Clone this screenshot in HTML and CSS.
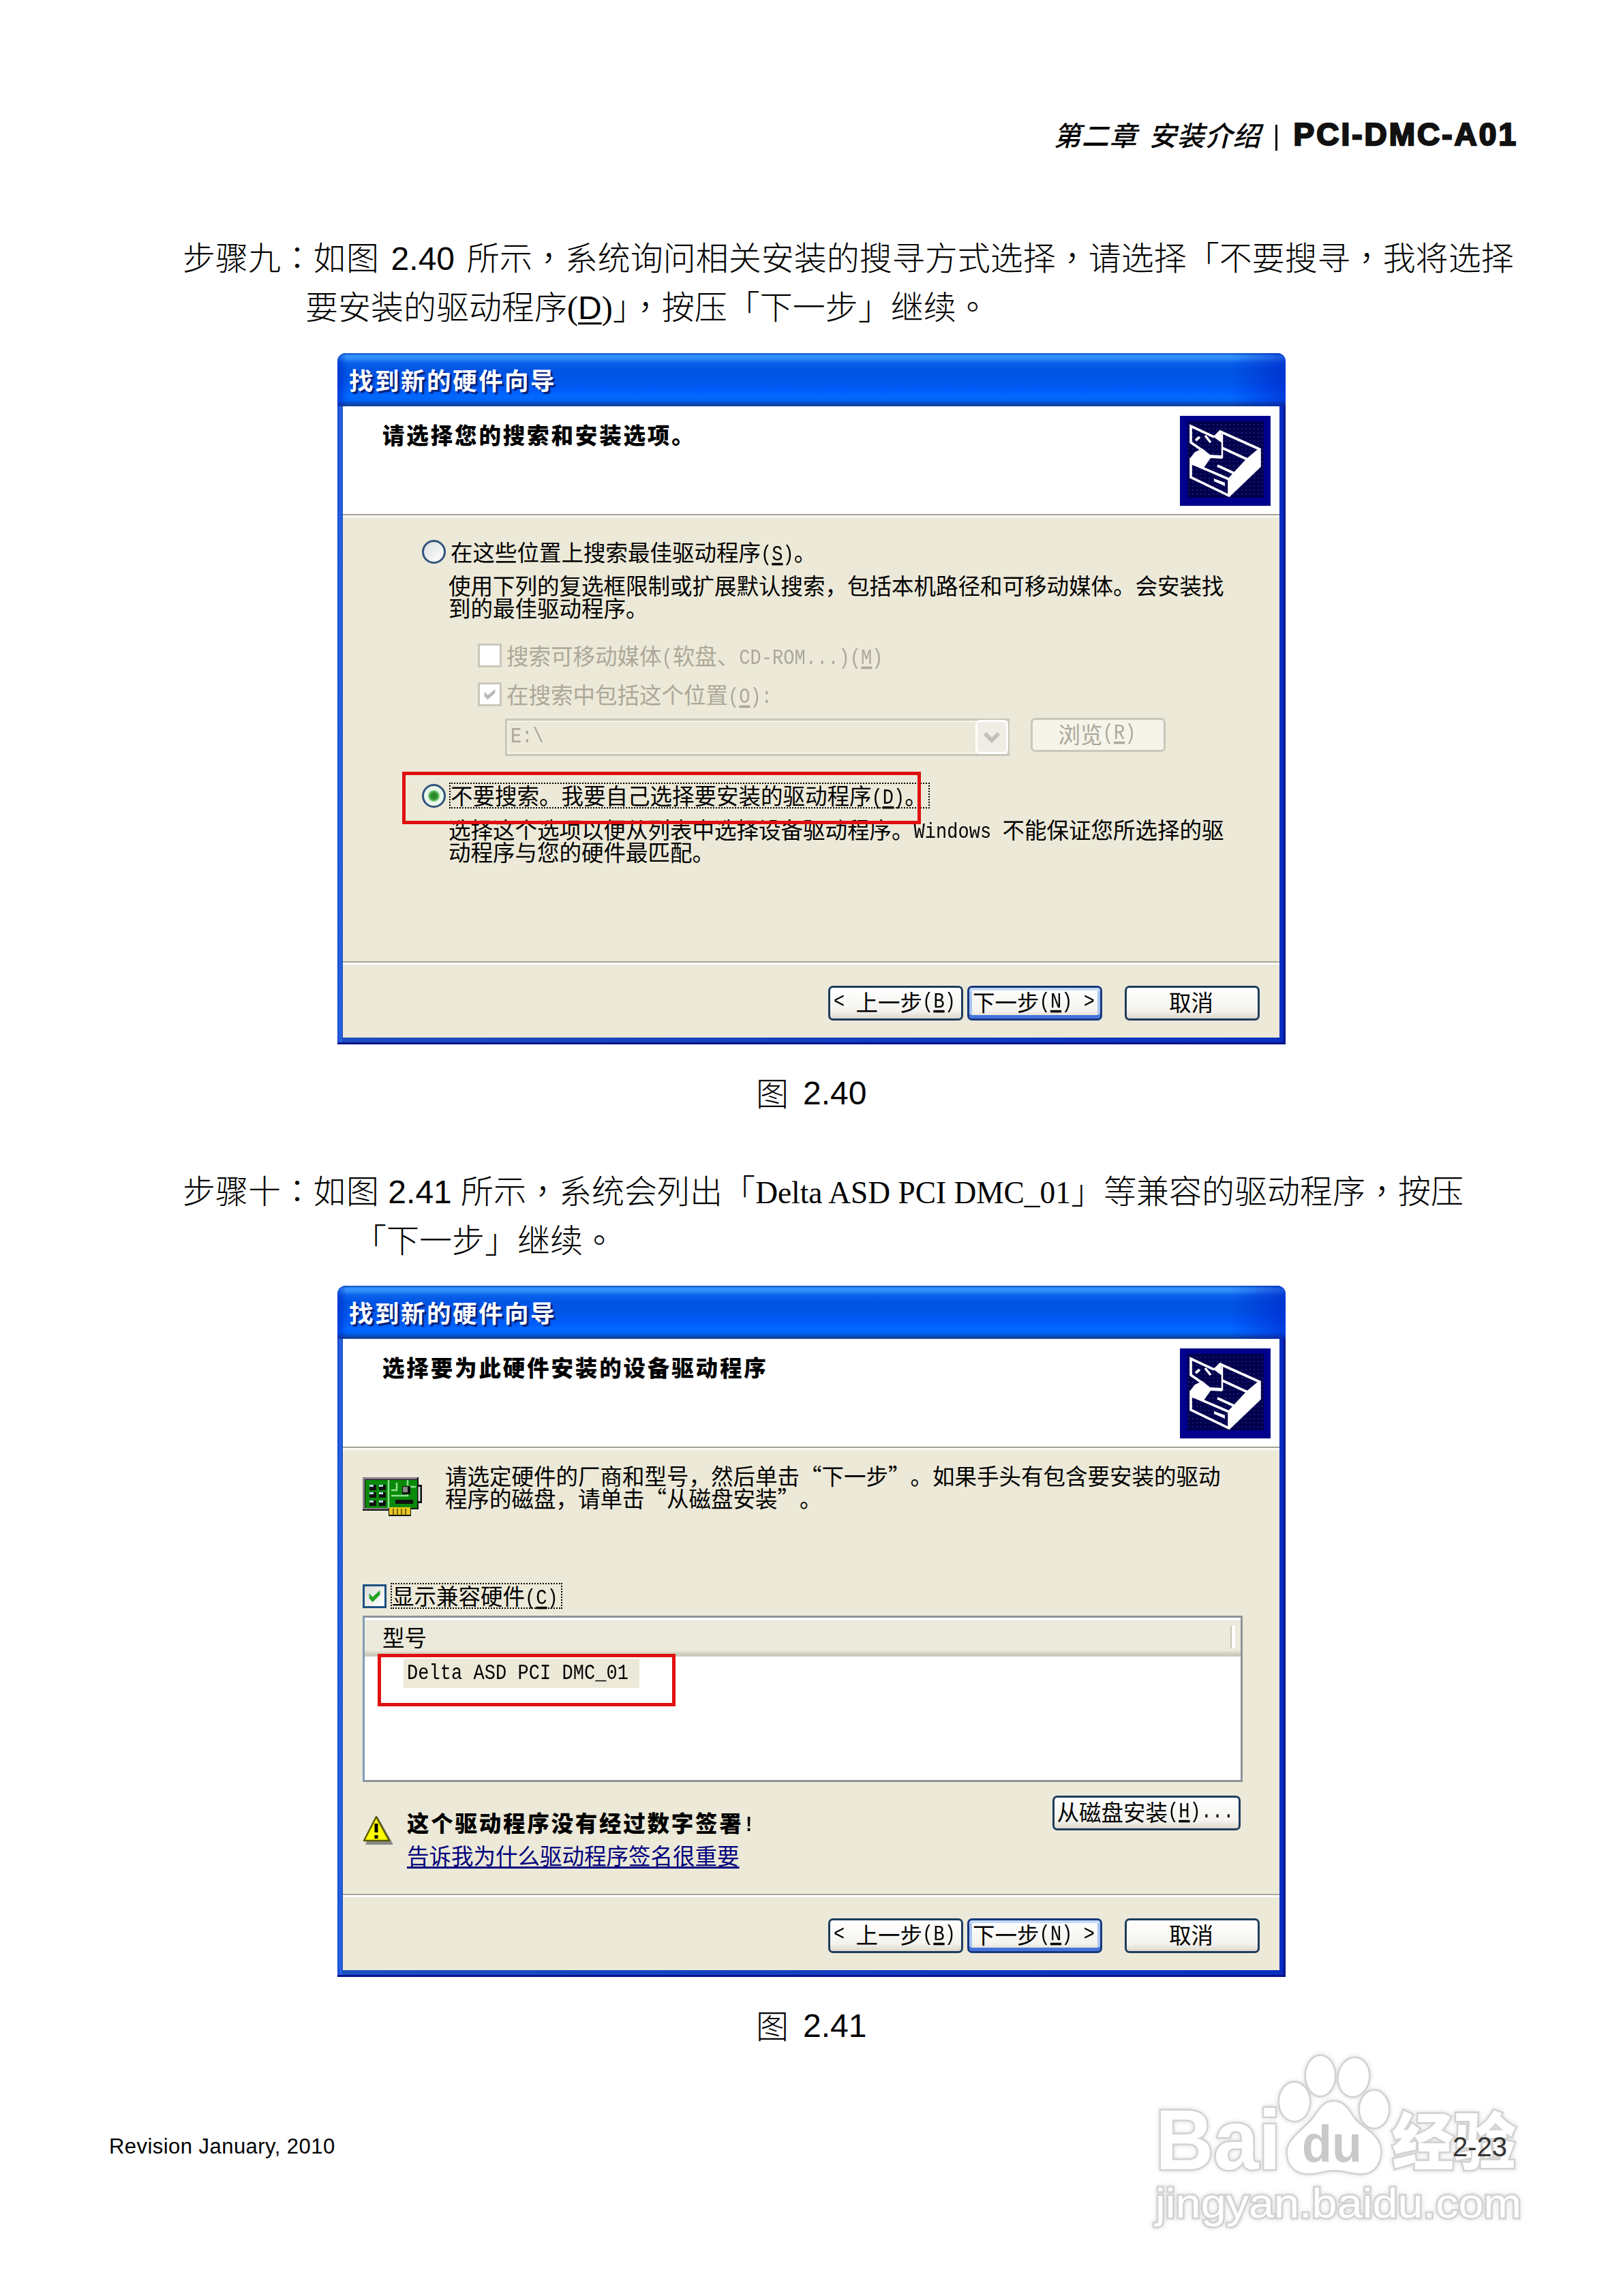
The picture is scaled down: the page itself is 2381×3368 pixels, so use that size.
FILE: index.html
```html
<!DOCTYPE html>
<html lang="zh-CN">
<head>
<meta charset="utf-8">
<title>PCI-DMC-A01 安装介绍</title>
<link rel="stylesheet" href="styles.css">
</head>
<body>
<svg width="0" height="0" class="defs" aria-hidden="true">
  <defs>
    <pattern id="dots" width="6" height="6" patternUnits="userSpaceOnUse"><rect width="6" height="6" fill="#00004c"/><rect width="2" height="2" fill="#1c1c78"/></pattern>
    <symbol id="wizard" viewBox="0 0 133 132">
      <rect width="133" height="132" fill="#00008c"/>
      <rect x="11" y="8" width="112" height="112" fill="url(#dots)"/>
      <g fill="none" stroke="#fff" stroke-width="3.6">
        <path d="M50 31 16 15V39L32 50"/>
        <path d="M52 30 59 23 117 49V74L72 117 16 90V62"/>
        <path d="M16 69 72 93V117M72 93 99 64 117 49M62 47 99 64M55 73 79 84M23 36l6-5M37 29l8 10"/>
        <path d="M62 26V62" stroke-width="2.5"/>
      </g>
      <g fill="#fff">
        <path d="M117 49V74L72 117V93L99 64Z"/>
        <path d="M48 30 60 23 62 40Z"/>
        <path d="M15 62 22 53 33 48 44 57 62 58V63L45 62 35 76 15 69Z"/>
        <path d="M50 92 66 98V103L50 96Z"/>
      </g>
    </symbol>
  </defs>
</svg>
<main class="page">
  <header class="head">
    <span class="chapter">第二章 安装介绍</span><span class="bar"></span><span class="model">PCI-DMC-A01</span>
  </header>

  <section class="step step-nine" lang="zh-TW">
    <div class="line wide-space">步骤九：如图 <span class="sans">2.40</span> 所示，系统询问相关安装的搜寻方式选择，请选择「不要搜寻，我将选择</div>
    <div class="line second">要安装的驱动程序<span class="serif">(</span><u class="sans">D</u><span class="serif">)</span>」，按压「下一步」继续。</div>
  </section>

  <section class="dialog">
    <div class="title">找到新的硬件向导</div>
    <div class="inner">
      <div class="banner"><b>请选择您的搜索和安装选项。</b><svg class="wiz"><use href="#wizard"/></svg></div>
      <div class="content">
        <div class="row radio-row first-row"><i class="radio"></i><span>在这些位置上搜索最佳驱动程序<s>(<u>S</u>)</s>。</span></div>
        <p class="desc">使用下列的复选框限制或扩展默认搜索，包括本机路径和可移动媒体。会安装找<br>到的最佳驱动程序。</p>
        <div class="row sub sub-a"><i class="check"></i><span>搜索可移动媒体<s>(</s>软盘、<s>CD-ROM...)(<u>M</u>)</s></span></div>
        <div class="row sub sub-b"><i class="check"><svg viewBox="0 0 35 35"><path d="M8 13 14 19 27 8V15L14 27 8 21Z" fill="#b9b7bd"/></svg></i><span>在搜索中包括这个位置<s>(<u>O</u>):</s></span></div>
        <div class="path-row">
          <div class="combo"><s>E:\</s><i class="drop"><svg viewBox="0 0 42 44"><path d="M11 17 21 27 31 17" fill="none" stroke="#c3c0b8" stroke-width="6"/></svg></i></div>
          <div class="btn off">浏览<s>(<u>R</u>)</s></div>
        </div>
        <div class="row radio-row second-row"><i class="radio on"></i><span class="focus">不要搜索。我要自己选择要安装的驱动程序<s>(<u>D</u>)</s>。</span></div>
        <p class="desc">选择这个选项以便从列表中选择设备驱动程序。<s>Windows </s>不能保证您所选择的驱<br>动程序与您的硬件最匹配。</p>
      </div>
      <div class="actions"><div class="btn"><s>&lt; </s>上一步<s>(<u>B</u>)</s></div><div class="btn default">下一步<s>(<u>N</u>) &gt;</s></div><div class="btn cancel">取消</div></div>
    </div>
    <div class="mark mark-radio"></div>
  </section>
  <div class="caption" lang="zh-TW"><span class="fig">图</span><span class="sans">2.40</span></div>

  <section class="step step-ten" lang="zh-TW">
    <div class="line">步骤十：如图<span class="sans"> 2.41 </span>所示，系统会列出「<span class="serif device">Delta ASD PCI DMC_01</span>」等兼容的驱动程序，按压</div>
    <div class="line second">「下一步」继续。</div>
  </section>

  <section class="dialog dialog-two">
    <div class="title">找到新的硬件向导</div>
    <div class="inner">
      <div class="banner"><b>选择要为此硬件安装的设备驱动程序</b><svg class="wiz"><use href="#wizard"/></svg></div>
      <div class="content list-content">
        <div class="intro">
          <svg class="board" viewBox="0 0 87 57">
            <path d="M0 0H82V11H87V38H82V47H71V57H38V49H0Z" fill="#111"/>
            <path d="M0 0H80V3H3V46H0Z" fill="#8d8090"/>
            <rect x="4" y="4" width="76" height="41" fill="#0a8a0a"/>
            <path d="M0 46H38" stroke="#8d8090" stroke-width="2"/>
            <path d="M38 4V45M42 27H66V14H78M50 8V19H42M66 4V12" stroke="#8fe08f" stroke-width="2.5" fill="none"/>
            <g fill="#111"><path d="M10 11H20V19H10ZM24 11H34V19H24ZM10 22H20V30H10ZM24 22H34V30H24ZM10 34H20V42H10ZM24 34H34V42H24ZM48 33H74V39H48ZM58 13H70V25H58Z"/></g>
            <g fill="#b9d8e8"><path d="M10 11H16V14H10ZM24 11H30V14H24ZM10 22H16V25H10ZM24 22H30V25H24ZM10 34H16V37H10ZM24 34H30V37H24Z"/></g>
            <rect x="59" y="14" width="7" height="8" fill="#888"/>
            <path d="M83 14V35" stroke="#ddd" stroke-width="3"/>
            <path d="M39 44H70V55H39Z" fill="#e8c820"/><path d="M45 46V55M51 46V55M57 46V55M63 46V55" stroke="#7a6400" stroke-width="2"/>
          </svg>
          <p>请选定硬件的厂商和型号，然后单击“下一步”。如果手头有包含要安装的驱动<br>程序的磁盘，请单击“从磁盘安装”。</p>
        </div>
        <div class="row compat"><i class="check live"><svg viewBox="0 0 35 35"><path d="M8 12 14 19 27 7V15L14 28 8 21Z" fill="#21a121"/></svg></i><span class="focus">显示兼容硬件<s>(<u>C</u>)</s></span></div>
        <div class="list">
          <div class="list-head">型号</div>
          <div class="item"><s>Delta ASD PCI DMC_01</s></div>
        </div>
        <div class="sign">
          <svg class="warn" viewBox="0 0 44 43"><path d="M22 5 43 42H6Z" fill="#888" stroke="#888" stroke-width="3"/><path d="M20 2 39 37H2Z" fill="#ffff00" stroke="#5a5a00" stroke-width="2.5" stroke-linejoin="round"/><path d="M20 12V25M20 29V34" stroke="#000" stroke-width="5"/></svg>
          <div class="sign-text"><b>这个驱动程序没有经过数字签署<s>!</s></b><a>告诉我为什么驱动程序签名很重要</a></div>
          <div class="btn disk">从磁盘安装<s>(<u>H</u>)...</s></div>
        </div>
      </div>
      <div class="actions"><div class="btn"><s>&lt; </s>上一步<s>(<u>B</u>)</s></div><div class="btn default">下一步<s>(<u>N</u>) &gt;</s></div><div class="btn cancel">取消</div></div>
    </div>
    <div class="mark mark-item"></div>
  </section>
  <div class="caption" lang="zh-TW"><span class="fig">图</span><span class="sans">2.41</span></div>

  <footer class="foot"><span class="rev">Revision January, 2010</span><span class="num">2-23</span></footer>

  <svg class="watermark" viewBox="0 0 640 330">
    <g class="wm">
      <text x="55" y="202" font-size="125" textLength="184" lengthAdjust="spacingAndGlyphs" class="latin">Bai</text>
      <ellipse cx="259" cy="103" rx="22" ry="28"/>
      <ellipse cx="297" cy="65" rx="21" ry="29"/>
      <ellipse cx="346" cy="67" rx="22" ry="28" transform="rotate(8 346 67)"/>
      <ellipse cx="376" cy="114" rx="21" ry="27"/>
      <path d="M316 103C330 103 337 113 345 126C355 141 384 150 385 174C386 192 376 208 358 208C342 208 332 203 317 203C302 203 296 208 279 208C259 208 248 194 249 175C250 157 276 142 288 126C297 114 302 103 316 103Z"/>
      <text x="402" y="195" font-size="91" textLength="182" class="cjk">经验</text>
      <text x="55" y="273" font-size="62" textLength="537" lengthAdjust="spacingAndGlyphs" class="url">jingyan.baidu.com</text>
    </g>
    <text x="270" y="191" font-size="76" textLength="88" lengthAdjust="spacingAndGlyphs" class="du">du</text>
  </svg>
</main>
</body>
</html>
```
FILE: styles.css
```css
* { box-sizing: border-box; }
body { margin: 0; background: #fff; }
p { margin: 0; }
s { display: inline-block; text-decoration: none; font-family: "Liberation Mono", monospace; font-size: 27px; font-weight: 400; line-height: 0; letter-spacing: 0.05px; white-space: pre; vertical-align: 2px; transform: scaleY(1.18); }
i { font-style: normal; display: block; flex: none; }
.defs { position: absolute; }
.page { position: relative; width: 2381px; height: 3368px; overflow: hidden; color: #000; font-family: "Noto Sans CJK SC", sans-serif; }
.sans { font-family: "Liberation Sans", sans-serif; font-weight: 400; }
.serif { font-family: "Liberation Serif", serif; font-weight: 400; }

.head { display: flex; justify-content: flex-end; align-items: center; height: 56px; margin-top: 169px; padding-right: 154px; }
.chapter { font-size: 40px; font-weight: 500; letter-spacing: 1px; word-spacing: 7px; transform: skewX(-14deg); margin-right: 17px; white-space: nowrap; }
.bar { width: 3px; height: 38px; background: #000; margin: 9px 24px 0 0; }
.model { font: 700 46px "Liberation Sans", sans-serif; letter-spacing: 3px; color: #111; -webkit-text-stroke: 2.4px #111; white-space: nowrap; }

.step { font-family: "Noto Sans CJK TC", sans-serif; font-weight: 300; font-size: 48px; line-height: 72px; white-space: nowrap; padding-left: 268px; }
.step .line { height: 72px; }
.step-nine { margin-top: 114px; }
.step-nine .wide-space { word-spacing: 7px; }
.step-nine .second { padding-left: 180px; }
.step-ten { margin-top: 68px; }
.step-ten .second { padding-left: 251px; }
.step u { text-decoration-thickness: 3px; text-underline-offset: 5px; }
.device { font-size: 45.4px; }

.dialog { position: relative; width: 1391px; height: 1014px; margin: 35px 0 0 495px; padding: 0 9px 7px 8px; display: flex; flex-direction: column; background: linear-gradient(90deg, #1442c8 0, #2a66e8 4px, #1c4fc0 8px, #0a30c0 1382px, #0a2cc4 1386px, #00107c 1391px); border-bottom: 3px solid #08128a; border-radius: 12px 12px 0 0; font-size: 32.5px; line-height: 32.5px; text-spacing-trim: space-all; white-space: nowrap; }
.dialog-two { margin-top: 34px; }
.title { height: 78px; flex: none; margin: 0 -9px 0 -8px; padding: 1px 0 0 17px; border-radius: 12px 12px 0 0; line-height: 76px; font-size: 35.5px; letter-spacing: 2.5px; font-weight: 700; color: #fff; text-shadow: 3px 3px 1px #06237c; background: linear-gradient(90deg, rgba(0,30,190,.55) 0, transparent 14px, transparent 1310px, rgba(0,20,190,.5) 1391px), linear-gradient(#0a55bd 0, #3593ff 4px, #2e8cf8 8px, #0a62ec 14px, #0054e3 24px, #0056e8 40px, #005cfa 54px, #0069ff 64px, #0062f4 70px, #0c45a8 75px, #15419a 78px); }
.inner { flex: 1; display: flex; flex-direction: column; background: #ece9d8; }
.banner { height: 163px; flex: none; display: flex; justify-content: space-between; padding: 0 13px 0 58px; background: #fff; border-bottom: 3px solid #fbfaf3; box-shadow: inset 0 -2px #a3a096; }
.banner b { line-height: 81px; letter-spacing: 2.85px; font-weight: 800; }
.wiz { width: 133px; height: 132px; margin-top: 14px; }
.content { flex: 1; padding-left: 116px; }
.row { display: flex; align-items: center; height: 38px; }
.row u, .btn u { text-decoration-thickness: 2.5px; text-underline-offset: 3px; }
.first-row { margin-top: 31px; }
.second-row { margin-top: 39px; }
.radio { width: 35px; height: 35px; border-radius: 50%; border: 3px solid #31547c; background: linear-gradient(135deg, #dcdfe0, #fff); margin-right: 6px; }
.radio.on { background: radial-gradient(circle, #2c8a2c 0 4px, #5cb85c 7px, #e4f6e4 9px, #f2fbf6 100%); }
.second-row .radio { margin-right: 5px; }
.first-row span { padding-left: 1px; }
.focus { height: 38px; line-height: 32px; border: 2.7px dotted #000; padding-right: 4px; }
.second-row .focus { width: 705px; padding-left: 0; }
.desc { margin-top: 14px; padding-left: 39px; margin-bottom: 2px; }
.check { width: 35px; height: 35px; border: 3px solid #cac8bb; background: #fff; margin-right: 7px; }
.check svg { display: block; width: 29px; height: 29px; }
.check.live { border-color: #1c5180; background: linear-gradient(135deg, #dcdcd7, #fff); margin-right: 6px; }
.sub { padding-left: 82px; color: #aca899; }
.sub-a { margin-top: 35px; }
.sub-b { margin-top: 19px; }
.path-row { display: flex; align-items: flex-start; margin-top: 16px; height: 56px; padding-left: 122px; }
.combo { width: 740px; height: 55px; margin: 1px 31px 0 0; border: 3px solid #c9c7ba; box-shadow: inset 0 0 0 2px #f5f3e8; display: flex; justify-content: space-between; align-items: center; padding: 0 2px 2px 5px; color: #aca899; }
.drop { width: 42px; height: 44px; background: #efede6; border-radius: 4px; box-shadow: 0 0 0 3px #fff; }
.drop svg { display: block; }
.btn { width: 198px; height: 51px; flex: none; border: 3px solid #1d3d5c; border-radius: 7px; background: linear-gradient(#fff, #f4f3ee 75%, #dcd8cc); display: flex; align-items: center; justify-content: center; padding: 0 3px 4px 0; }
.btn.off { height: 50px; border-color: #c9c7ba; background: #f5f4ea; color: #aca899; }
.btn.default { box-shadow: inset 0 4px #c6dafa, inset 0 -5px #4474dc, inset 4px 0 #a9c5f5, inset -4px 0 #a9c5f5; border-color: #17387c; }
.actions { height: 112px; flex: none; display: flex; border-top: 2px solid #aaa698; box-shadow: inset 0 3px #fff; padding: 34px 29px 0 0; justify-content: flex-end; gap: 6px; }
.cancel { margin-left: 27px; }
.mark { position: absolute; border: 5px solid #e01010; }
.mark-radio { left: 95px; top: 614px; width: 761px; height: 77px; }
.mark-item { left: 59px; top: 540px; width: 437px; height: 77px; }

.list-content { padding-left: 29px; padding-right: 54px; }
.intro { display: flex; gap: 34px; margin-top: 21px; height: 76px; }
.board { width: 87px; height: 57px; margin-top: 19px; flex: none; }
.compat { margin-top: 98px; }
.list { width: 1291px; height: 244px; margin-top: 10px; background: #fff; border: 3px solid #8d9298; border-left-color: #7f9db9; }
.list-head { position: relative; height: 57px; padding-left: 26px; line-height: 56px; background: linear-gradient(#fff 0 3px, #ebeadb 4px 48px, #d6d2c2 52px, #cbc7b8 56px); }
.list-head::after { content: ""; position: absolute; right: 8px; top: 12px; width: 5px; height: 33px; border-left: 2px solid #c7c5b2; background: #fff; }
.item { width: 346px; height: 43px; margin: 3px 0 0 57px; padding: 1px 0 0 5px; background: #ece9d8; }
.sign { display: flex; align-items: flex-start; margin-top: 20px; }
.warn { width: 44px; height: 43px; margin-top: 29px; }
.sign-text { flex: 1; height: 110px; display: flex; flex-direction: column; padding: 20px 0 0 21px; line-height: 38px; gap: 10px; }
.sign-text b { height: 38px; letter-spacing: 2.75px; font-weight: 800; }
.sign-text b s { font-weight: 700; }
.sign-text a { height: 38px; color: #00007c; text-decoration: underline; text-decoration-thickness: 2.7px; text-underline-offset: 3px; }
.disk { width: 276px; margin-right: 3px; }

.caption { display: flex; gap: 21px; height: 72px; margin-top: 36px; padding-left: 1109px; font: 300 48px/72px "Noto Sans CJK TC", sans-serif; }
.caption .fig { margin-top: -3px; }
.caption .sans { font-family: "Liberation Sans", sans-serif; font-weight: 400; }
.foot { position: relative; z-index: 2; display: flex; justify-content: space-between; align-items: center; height: 40px; margin-top: 121px; padding: 0 170px 0 160px; font: 30.3px "Liberation Sans", sans-serif; }
.rev { font-size: 31px; letter-spacing: 0.45px; }
.num { font-size: 40px; color: #333; }
.watermark { position: absolute; left: 1640px; top: 2980px; width: 640px; height: 330px; z-index: 1; }
.wm { fill: #fff; stroke: #d2d2d2; stroke-width: 5px; paint-order: stroke; filter: drop-shadow(0 0 3px #d8d8d8); }
.latin, .du { font-family: "Liberation Sans", sans-serif; font-weight: 700; }
.url { font-family: "Liberation Sans", sans-serif; font-weight: 400; }
.cjk { font-family: "Noto Sans CJK SC", sans-serif; font-weight: 900; }
.du { fill: #c9c9c9; }
```
